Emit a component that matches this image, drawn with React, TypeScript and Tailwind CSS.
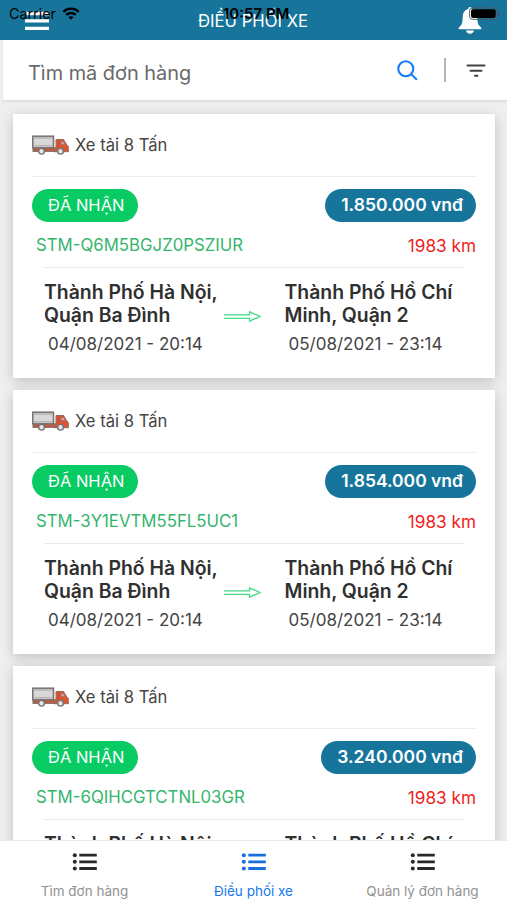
interface Order {
  code: string;
  price: string;
  distance: string;
}

const orders: Order[] = [
  { code: "STM-Q6M5BGJZ0PSZIUR", price: "1.850.000 vnđ", distance: "1983 km" },
  { code: "STM-3Y1EVTM55FL5UC1", price: "1.854.000 vnđ", distance: "1983 km" },
  { code: "STM-6QIHCGTCTNL03GR", price: "3.240.000 vnđ", distance: "1983 km" },
];

const tabs = [
  { label: "Tìm đơn hàng", active: false },
  { label: "Điều phối xe", active: true },
  { label: "Quản lý đơn hàng", active: false },
];

function TruckIcon() {
  return (
    <svg viewBox="0 0 37 20" className="h-5 w-[37px] shrink-0" aria-hidden="true">
      <rect x="1" y="12.8" width="23" height="3.6" fill="#c9563b" stroke="#77706e" strokeWidth="1" />
      <rect x="0.8" y="1.2" width="20.7" height="11.6" fill="#d8d8d8" stroke="#77716f" strokeWidth="1.5" />
      <path d="M1.5 3H21M2 10.8h19" stroke="#a19c9b" strokeWidth="0.9" />
      <path d="M24 4.5h7.5l3 5 1.8 2v5.2H22v-3h2z" fill="#df5432" stroke="#94695f" strokeWidth="1" />
      <path d="M28.8 6.2h2.6l2 3.6h-4.6z" fill="#cfa79d" stroke="#9c5a4a" strokeWidth="0.7" />
      <path d="M26.5 6v6" stroke="#b9472c" strokeWidth="0.8" />
      <circle cx="9.5" cy="16.2" r="2.9" fill="#e4e4e4" stroke="#767170" strokeWidth="1.4" />
      <circle cx="28.5" cy="16.2" r="2.9" fill="#e4e4e4" stroke="#767170" strokeWidth="1.4" />
    </svg>
  );
}

function ArrowIcon() {
  return (
    <svg viewBox="0 0 38 12" className="h-3 w-[38px]" fill="none" stroke="#43dc88" strokeWidth="1.3" aria-hidden="true">
      <path d="M0 4.8h25.500V1.800L36 6.500 25.500 11.200V8.300H0" />
    </svg>
  );
}

function ListIcon() {
  return (
    <svg viewBox="0 0 26 20" className="h-5 w-[26px]" fill="currentColor" aria-hidden="true">
      <circle cx="2.8" cy="3.2" r="2" />
      <circle cx="2.8" cy="9.8" r="2" />
      <circle cx="2.8" cy="16.5" r="2" />
      <path d="M7.300 1.800h17.500v2.800H7.300zM7.300 8.400h17.500v2.800H7.300zM7.300 15.100h17.500v2.800H7.300z" />
    </svg>
  );
}

function StatusBar() {
  return (
    <div className="absolute inset-x-0 top-0 flex h-7 items-center text-black">
      <span className="ml-[9px] w-[47px] text-[14.300px]">Carrier</span>
      <svg viewBox="0 0 18 13" className="ml-[6px] mb-px h-[13px] w-[18px]" fill="none" stroke="currentColor" strokeWidth="2.4" aria-hidden="true">
        <path d="M1.300 4.800c4.400-4.200 11-4.200 15.400 0M4.200 7.900c2.700-2.500 6.900-2.500 9.600 0" />
        <path d="M9 12.700 6.400 10.100c1.500-1.300 3.700-1.300 5.200 0z" fill="currentColor" stroke="none" />
      </svg>
      <span className="absolute left-[223px] whitespace-nowrap text-[15px] font-semibold">10:57 PM</span>
      <svg viewBox="0 0 32 14" className="absolute left-[469px] h-[14px] w-8" aria-hidden="true">
        <rect x="0.6" y="0.9" width="27.5" height="11.4" rx="3" fill="none" stroke="#4d5962" strokeWidth="1" />
        <rect x="2" y="2.3" width="24.7" height="8.6" rx="1.8" fill="#000" />
        <path d="M29.300 4.600c1.800.5 1.800 3.600 0 4.100z" fill="#36515e" />
      </svg>
    </div>
  );
}

function Header() {
  return (
    <header className="relative flex h-10 shrink-0 items-center bg-[#17759b] text-white">
      <svg viewBox="0 0 24 20" className="ml-[25px] mt-px h-5 w-6" fill="#fff" aria-hidden="true">
        <path d="M0 .8h24v3.400H0zM0 8.200h24v3.400H0zM0 15.700h24v3.400H0z" />
      </svg>
      <h1 className="ml-[149px] whitespace-nowrap pt-px text-[16.700px] leading-10">ĐIỀU PHỐI XE</h1>
      <svg viewBox="0 0 24 27" className="absolute left-[458px] top-[7px] h-[27px] w-6" fill="#fff" aria-hidden="true">
        <path d="M12 0c1.200 0 1.800.8 1.800 2 3.500 1 5.500 3.700 5.500 7.600 0 6.900.9 8.400 3.700 10.800.8.700.5 1.800-.5 1.800h-21c-1 0-1.300-1.100-.5-1.800 2.800-2.400 3.700-3.900 3.700-10.800C4.700 5.700 6.700 3 10.200 2c0-1.200.6-2 1.800-2zM8 23.500h8c-.4 2-1.900 3.200-4 3.200s-3.600-1.200-4-3.200z" />
      </svg>
      <StatusBar />
    </header>
  );
}

function SearchBar() {
  return (
    <div className="ml-[3px] flex h-[61px] shrink-0 items-center border-b border-[#dedede] bg-white shadow-[0_1px_2px_rgba(0,0,0,0.08)]">
      <span className="ml-[25px] mt-[7px] w-[369px] text-[19.900px] text-[#696969]">Tìm mã đơn hàng</span>
      <svg viewBox="0 0 22 22" className="h-[21px] w-[21px]" fill="none" stroke="#147efb" strokeWidth="2.2" aria-hidden="true">
        <circle cx="9.2" cy="9.2" r="7.9" />
        <path d="m14.800 14.800 6 6" />
      </svg>
      <div className="ml-[26px] h-6 w-[2px] bg-[#b5b5b5]" />
      <svg viewBox="0 0 20 14" className="ml-[20px] mt-[2px] h-[14px] w-5" fill="none" stroke="#424242" strokeWidth="2" strokeLinecap="round" aria-hidden="true">
        <path d="M1.500 1.500h17M4.500 6.700h11M9 11.700h2.500" />
      </svg>
    </div>
  );
}

function Stop({ city, time }: { city: [string, string]; time: string }) {
  return (
    <div className="w-[180px] whitespace-nowrap">
      <p className="text-[19.400px] font-semibold leading-[23px] text-[#303030]">
        {city[0]}
        <br />
        {city[1]}
      </p>
      <p className="ml-[4px] mt-[5px] text-[17px] leading-6 text-[#444]">{time}</p>
    </div>
  );
}

function OrderCard({ order }: { order: Order }) {
  return (
    <article className="h-[264px] shrink-0 bg-white px-[19px] shadow-[0_3px_12px_rgba(0,0,0,0.2)]">
      <div className="flex h-[63px] items-center border-b border-[#eee] text-[16.600px] text-[#444]">
        <TruckIcon />
        <span className="ml-[6px]">Xe tải 8 Tấn</span>
      </div>
      <div className="mt-[12px] flex items-center justify-between">
        <span className="flex h-[33px] w-[106px] items-center rounded-full bg-[#08cb64] pl-[16px] text-[16.500px] text-white">
          ĐÃ NHẬN
        </span>
        <span className="flex h-[33px] items-center rounded-full bg-[#17759b] pl-[16px] pr-[13px] text-[17.500px] font-semibold text-white">
          {order.price}
        </span>
      </div>
      <div className="flex h-[45px] items-center justify-between pl-[4px] pt-[2px] text-[16.800px]">
        <span className="text-[#35b56d]">{order.code}</span>
        <span className="text-[17.200px] text-[#ef2222]">{order.distance}</span>
      </div>
      <div className="mx-[12px] flex border-t border-[#e9e9e9] pt-[13px]">
        <Stop city={["Thành Phố Hà Nội,", "Quận Ba Đình"]} time="04/08/2021 - 20:14" />
        <div className="mr-[24px] mt-[29px] w-[37px]">
          <ArrowIcon />
        </div>
        <Stop city={["Thành Phố Hồ Chí", "Minh, Quận 2"]} time="05/08/2021 - 23:14" />
      </div>
    </article>
  );
}

function TabBar() {
  return (
    <nav className="relative z-10 grid h-[60px] shrink-0 grid-cols-3 border-t border-[#e8e8e8] bg-white">
      {tabs.map((tab) => (
        <button
          key={tab.label}
          type="button"
          className={`flex flex-col items-center pt-[11px] ${tab.active ? "text-[#166ee1]" : "text-[#29292b]"}`}
        >
          <ListIcon />
          <span className={`mt-[9px] whitespace-nowrap text-[13.500px] leading-5 ${tab.active ? "text-[#1778ea]" : "text-[#929292]"}`}>
            {tab.label}
          </span>
        </button>
      ))}
    </nav>
  );
}

export default function App() {
  return (
    <div className="flex h-[900px] w-[507px] flex-col overflow-hidden bg-[#efefef] font-['Inter','Noto_Sans',sans-serif]">
      <Header />
      <SearchBar />
      <main className="flex min-h-0 flex-1 flex-col gap-3 overflow-hidden pl-[13px] pr-3 pt-[13px]">
        {orders.map((order) => (
          <OrderCard key={order.code} order={order} />
        ))}
      </main>
      <TabBar />
    </div>
  );
}
